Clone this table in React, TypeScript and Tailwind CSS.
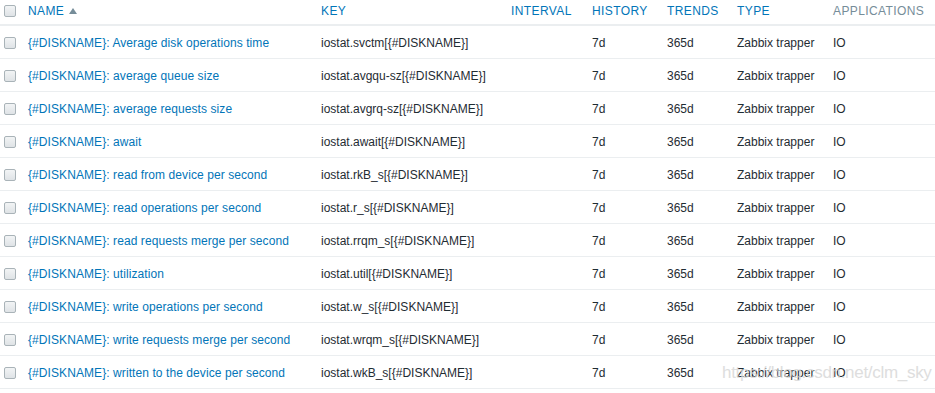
import React from "react";

const rows: [string, string][] = [
  ["Average disk operations time", "iostat.svctm[{#DISKNAME}]"],
  ["average queue size", "iostat.avgqu-sz[{#DISKNAME}]"],
  ["average requests size", "iostat.avgrq-sz[{#DISKNAME}]"],
  ["await", "iostat.await[{#DISKNAME}]"],
  ["read from device per second", "iostat.rkB_s[{#DISKNAME}]"],
  ["read operations per second", "iostat.r_s[{#DISKNAME}]"],
  ["read requests merge per second", "iostat.rrqm_s[{#DISKNAME}]"],
  ["utilization", "iostat.util[{#DISKNAME}]"],
  ["write operations per second", "iostat.w_s[{#DISKNAME}]"],
  ["write requests merge per second", "iostat.wrqm_s[{#DISKNAME}]"],
  ["written to the device per second", "iostat.wkB_s[{#DISKNAME}]"],
];

const grid =
  "grid grid-cols-[28px_293px_190px_81px_75px_70px_96px_1fr] items-center";

function Box() {
  return (
    <div className="ml-[4px] w-[12px] h-[12px] rounded-[2px] border border-[#a9b3b8] bg-gradient-to-b from-[#f2f4f5] to-[#dfe3e6]" />
  );
}

export default function App() {
  return (
    <div
      className="relative w-[935px] h-[393px] bg-white text-[12px] text-[#1f2c33] overflow-hidden"
      style={{ fontFamily: '"Liberation Sans", Arial, sans-serif' }}
    >
      <div className={`${grid} h-[26px] pb-[2px] border-b-2 border-[#ebeef0] text-[12px] tracking-[0.4px]`}>
        <Box />
        <div className="text-[#0275b8] flex items-center gap-[5px]">
          NAME
          <svg width="8" height="6" viewBox="0 0 8 6">
            <path d="M0 6 L4 0 L8 6 Z" fill="#768d99" />
          </svg>
        </div>
        <div className="text-[#0275b8]">KEY</div>
        <div className="text-[#0275b8]">INTERVAL</div>
        <div className="text-[#0275b8]">HISTORY</div>
        <div className="text-[#0275b8]">TRENDS</div>
        <div className="text-[#0275b8]">TYPE</div>
        <div className="text-[#768d99]">APPLICATIONS</div>
      </div>
      {rows.map(([n, k]) => (
        <div key={k} className={`${grid} h-[33px] pt-[1px] border-b border-[#ebeef0]`}>
          <Box />
          <div className="text-[#0275b8] whitespace-nowrap tracking-[0.08px]">{"{#DISKNAME}: " + n}</div>
          <div className="whitespace-nowrap">{k}</div>
          <div></div>
          <div>7d</div>
          <div>365d</div>
          <div>Zabbix trapper</div>
          <div>IO</div>
        </div>
      ))}
      <div className="absolute left-[722px] top-[364px] text-[17px] leading-none tracking-[-0.3px] text-[#d6d6d6] opacity-80 whitespace-nowrap pointer-events-none">
        https://blog.csdn.net/clm_sky
      </div>
    </div>
  );
}
